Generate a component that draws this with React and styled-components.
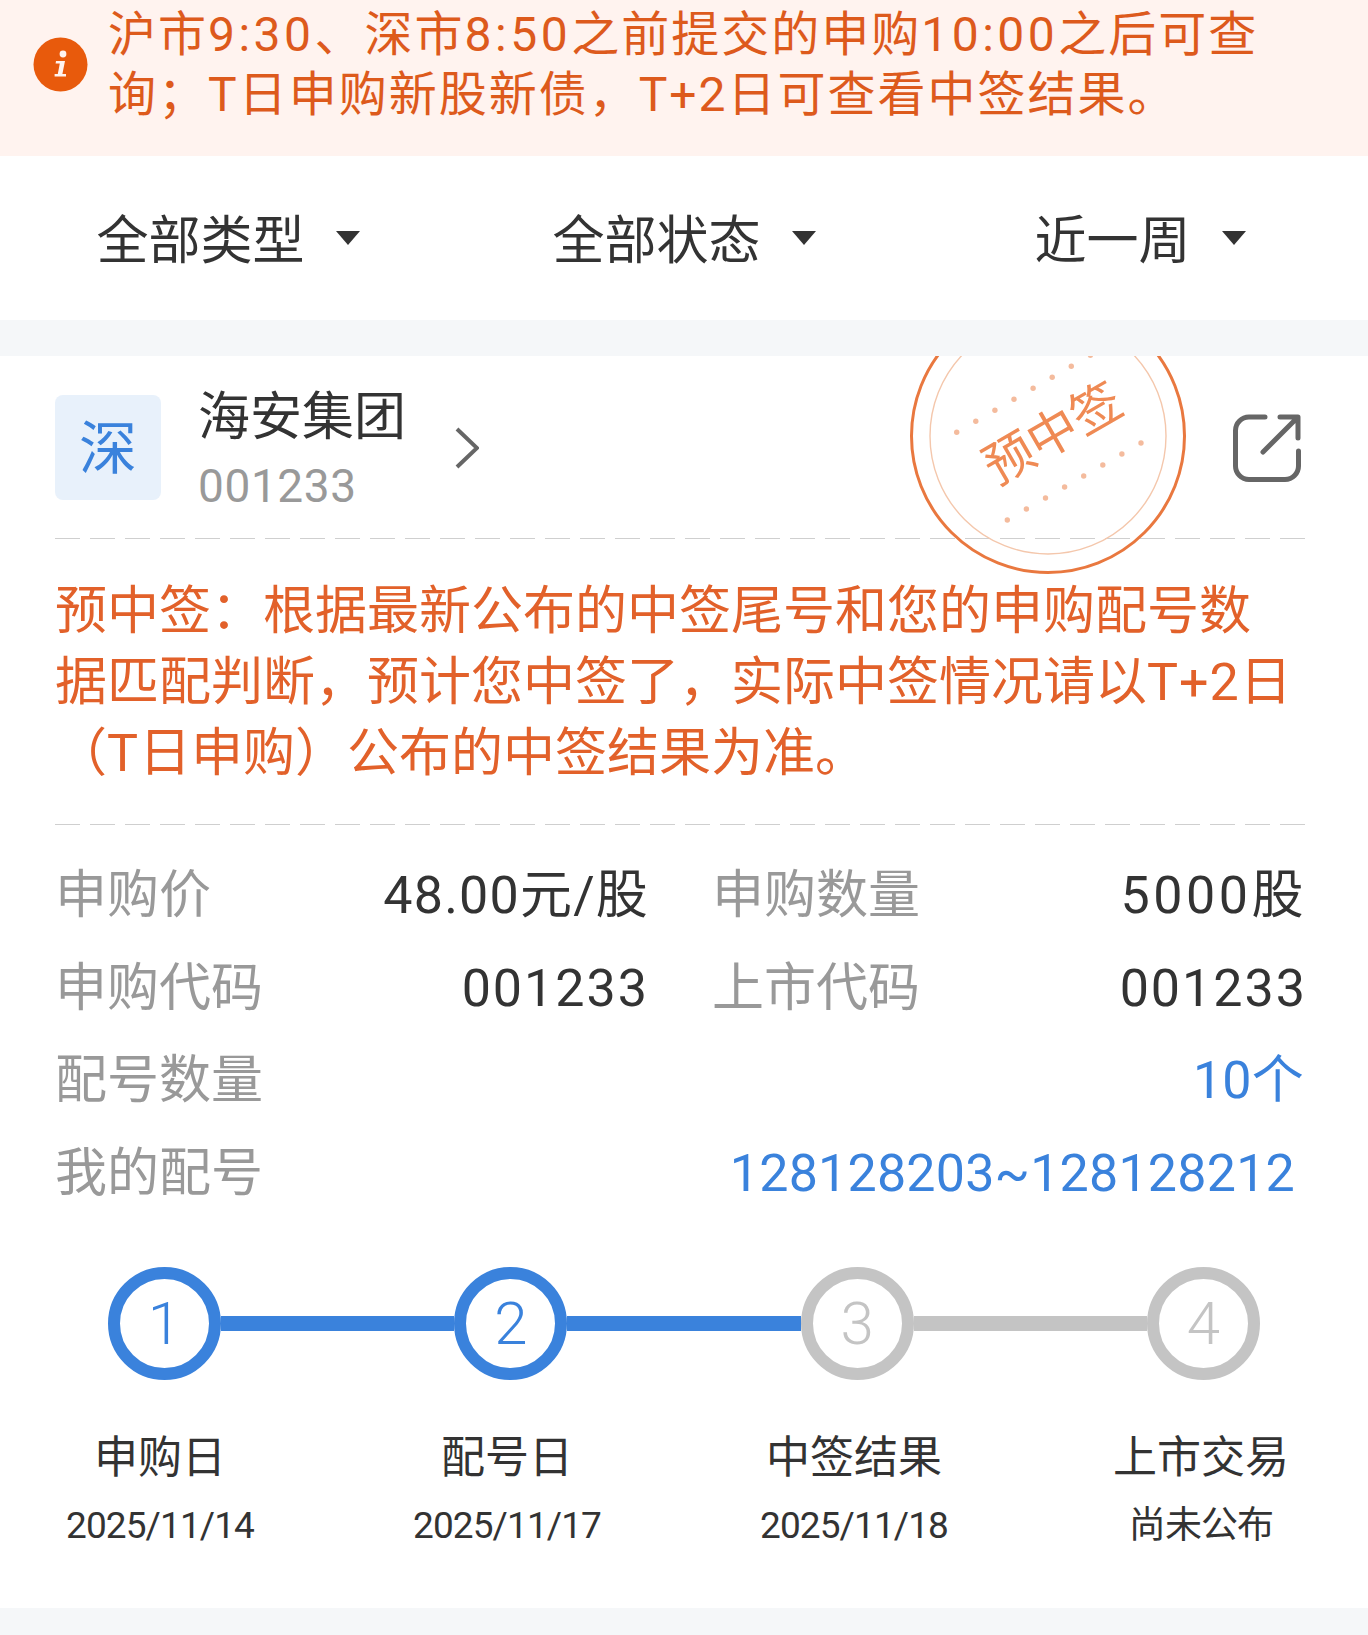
import React from 'react'
import styled, { createGlobalStyle } from 'styled-components'

const blue = '#3a82dc'
const grey = '#c4c4c4'
const orange = '#e2612a'
const stack = `Roboto, "Noto Sans CJK SC", sans-serif`

const PageStyle = createGlobalStyle`
  html, body {
    margin: 0;
    padding: 0;
    background: #f5f7f9;
  }
  body {
    font-family: ${stack};
    color: #333;
  }
`
const Page = styled.div`
  width: 1368px;
  height: 1635px;
  overflow: hidden;
`
const Notice = styled.div`
  display: flex;
  align-items: center;
  box-sizing: border-box;
  height: 156px;
  padding: 4px 0 32px 33px;
  background: #fff3ef;
  color: #dd5a1c;
`
const NoticeText = styled.div`
  margin-left: 20px;
  padding-top: 2px;
  font-size: 48px;
  line-height: 60px;
  letter-spacing: 2px;
`
const Line = styled.div`
  white-space: nowrap;
`
const Num = styled.span`
  letter-spacing: 3.5px;
`
const Filters = styled.div`
  display: grid;
  grid-template-columns: repeat(3, 1fr);
  height: 164px;
  background: #fff;
`
const Filter = styled.div`
  display: flex;
  align-items: center;
  justify-content: center;
  gap: 31px;
  padding-bottom: 4px;
  font-size: 52px;
`
const Caret = styled.span`
  width: 0;
  height: 0;
  margin-top: 4px;
  border-left: 12.5px solid transparent;
  border-right: 12.5px solid transparent;
  border-top: 14px solid #333;
`
const Card = styled.div`
  position: relative;
  overflow: hidden;
  margin-top: 36px;
  padding: 39px 63px 49px 55px;
  background: #fff;
`
const Head = styled.div`
  display: flex;
  align-items: center;
  height: 105px;
  padding-bottom: 38px;
`
const Market = styled.div`
  display: flex;
  align-items: center;
  justify-content: center;
  box-sizing: border-box;
  width: 106px;
  height: 105px;
  padding-bottom: 8px;
  border-radius: 8px;
  background: #e8f1fb;
  color: ${blue};
  font-size: 58px;
`
const Stock = styled.div`
  align-self: flex-start;
  margin: -10px 0 0 37px;
`
const StockName = styled.div`
  font-size: 52px;
  line-height: 66px;
`
const StockCode = styled.div`
  font-size: 46px;
  line-height: 70px;
  letter-spacing: 0.6px;
  color: #999;
`
const Chevron = styled.svg`
  width: 24px;
  height: 42px;
  margin-left: 49px;
`
const ShareIcon = styled.svg`
  width: 68px;
  height: 68px;
  margin-left: auto;
  margin-right: 4px;
`
const Stamp = styled.svg`
  position: absolute;
  top: -60px;
  left: 908px;
  width: 280px;
  height: 290px;
`
const Dashed = styled.div`
  height: 1px;
  background: repeating-linear-gradient(90deg, #cfcfcf 0 25px, transparent 25px 35px);
`
const Warning = styled.div`
  padding: 37px 0 35px;
  font-size: 52px;
  line-height: 71px;
  color: ${orange};
`
const Latin = styled.span`
  letter-spacing: 1px;
`
const Rows = styled.div`
  display: grid;
  grid-template-columns: 592px 593px;
  column-gap: 65px;
  padding-top: 25px;
`
const Row = styled.div`
  display: flex;
  justify-content: space-between;
  height: 92.5px;
  grid-column: ${(p) => (p.$wide ? '1 / -1' : 'auto')};
  font-size: 52px;
  line-height: 92.5px;
`
const Label = styled.span`
  color: #999;
`
const Value = styled.span`
  letter-spacing: ${(p) => p.$spacing ?? 2}px;
  color: ${(p) => (p.$link ? blue : '#333')};
  margin-right: ${(p) => p.$inset ?? -2}px;
`
const Track = styled.div`
  display: flex;
  align-items: center;
  margin: 47px 45px 0 53px;
`
const Dot = styled.div`
  display: flex;
  align-items: center;
  justify-content: center;
  flex: none;
  box-sizing: border-box;
  width: 113px;
  height: 113px;
  border: 12px solid ${(p) => (p.$on ? blue : grey)};
  border-radius: 50%;
  color: ${(p) => (p.$on ? blue : grey)};
  font-size: 60px;
  font-weight: 300;
`
const Link = styled.div`
  flex: 1;
  height: 15px;
  background: ${(p) => (p.$on ? blue : grey)};
`
const Dates = styled.div`
  display: flex;
  justify-content: space-between;
  margin: 43px -16px 0 -15px;
`
const DateCol = styled.div`
  width: 240px;
  text-align: center;
`
const DateName = styled.div`
  font-size: 44px;
  line-height: 70px;
`
const DateValue = styled.div`
  font-size: 37px;
  line-height: 66px;
  letter-spacing: -0.9px;
`

const steps = [
  { n: 1, name: '申购日', date: '2025/11/14', on: true },
  { n: 2, name: '配号日', date: '2025/11/17', on: true },
  { n: 3, name: '中签结果', date: '2025/11/18' },
  { n: 4, name: '上市交易', date: '尚未公布' },
]

const InfoIcon = () => (
  <svg width="55" height="55" viewBox="0 0 55 55" style={{ flex: 'none' }}>
    <circle cx="27.5" cy="27.5" r="27" fill="#e85a0c" />
    <circle cx="30" cy="17" r="3.4" fill="#fff3ef" />
    <path d="M23 24h9l-2.6 13H33v2.6H21.6v-2.6h3.2l2-10.4h-4.2z" fill="#fff3ef" />
  </svg>
)

// round seal that lies over the card header, clipped by the card's top edge
const DealStamp = () => {
  const upper = Array.from({ length: 8 }, (_, i) => [48.7 + i * 19.1, 136.3 - i * 11])
  const lower = Array.from({ length: 8 }, (_, i) => [99.3 + i * 19.1, 224 - i * 11])
  return (
    <Stamp viewBox="0 0 280 290">
      <circle cx="140" cy="140" r="136.5" fill="none" stroke="#e9783f" strokeWidth="3" />
      <circle cx="140" cy="140" r="118" fill="none" stroke="#f4c7ac" strokeWidth="1.4" />
      {[...upper, ...lower].map(([x, y]) => (
        <circle key={`${x}-${y}`} cx={x} cy={y} r="2.7" fill="#f4bb9d" />
      ))}
      <text
        x="0"
        y="0"
        transform="translate(145 138) rotate(-30)"
        textAnchor="middle"
        dominantBaseline="central"
        fontSize="50"
        fill="#ef8a54"
        fontFamily={stack}
      >
        预中签
      </text>
    </Stamp>
  )
}

const App = () => (
  <Page>
    <PageStyle />
    <Notice>
      <InfoIcon />
      <NoticeText>
        <Line>沪市<Num>9:30</Num>、深市<Num>8:50</Num>之前提交的申购<Num>10:00</Num>之后可查</Line>
        <Line>询；T日申购新股新债，T+2日可查看中签结果。</Line>
      </NoticeText>
    </Notice>

    <Filters>
      {['全部类型', '全部状态', '近一周'].map((f) => (
        <Filter key={f}>
          {f}
          <Caret />
        </Filter>
      ))}
    </Filters>

    <Card>
      <DealStamp />
      <Head>
        <Market>深</Market>
        <Stock>
          <StockName>海安集团</StockName>
          <StockCode>001233</StockCode>
        </Stock>
        <Chevron viewBox="0 0 24 42" fill="none" stroke="#666" strokeWidth="4">
          <path d="M2 2l20 19L2 40" />
        </Chevron>
        <ShareIcon viewBox="0 0 68 68" fill="none" stroke="#666" strokeWidth="5" strokeLinecap="round" strokeLinejoin="round">
          <path d="M32 3H16A13.5 13.5 0 0 0 2.5 16.5V52A13.5 13.5 0 0 0 16 65.5H52A13.5 13.5 0 0 0 65.5 52V37" />
          <path d="M47 3H65V24M30 38L64 4" />
        </ShareIcon>
      </Head>
      <Dashed />
      <Warning>
        <Line>预中签：根据最新公布的中签尾号和您的申购配号数</Line>
        <Line>据匹配判断，预计您中签了，实际中签情况请以<Latin>T+2</Latin>日</Line>
        <Line>（<Latin>T</Latin>日申购）公布的中签结果为准。</Line>
      </Warning>
      <Dashed />
      <Rows>
        <Row><Label>申购价</Label><Value $spacing={1.2}>48.00元/股</Value></Row>
        <Row><Label>申购数量</Label><Value $spacing={3.5}>5000股</Value></Row>
        <Row><Label>申购代码</Label><Value>001233</Value></Row>
        <Row><Label>上市代码</Label><Value>001233</Value></Row>
        <Row $wide><Label>配号数量</Label><Value $link $spacing={0.2} $inset={1}>10个</Value></Row>
        <Row $wide><Label>我的配号</Label><Value $link $spacing={0.2} $inset={10}>128128203~128128212</Value></Row>
      </Rows>
      <Track>
        {steps.map((s, i) => (
          <React.Fragment key={s.n}>
            {i > 0 && <Link $on={steps[i - 1].on} />}
            <Dot $on={s.on}>{s.n}</Dot>
          </React.Fragment>
        ))}
      </Track>
      <Dates>
        {steps.map((s) => (
          <DateCol key={s.n}>
            <DateName>{s.name}</DateName>
            <DateValue>{s.date}</DateValue>
          </DateCol>
        ))}
      </Dates>
    </Card>
  </Page>
)

export default App
